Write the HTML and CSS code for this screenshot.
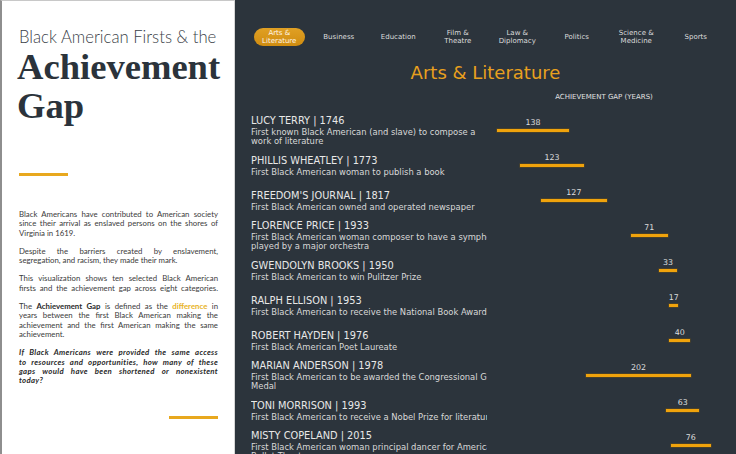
FILE: index.html
```html
<!DOCTYPE html>
<html lang="en">
<head>
<meta charset="utf-8">
<title>Black American Firsts &amp; the Achievement Gap</title>
<link rel="stylesheet" href="styles.css">
</head>
<body>
<div class="page">
  <aside class="intro">
    <div class="kicker">Black American Firsts &amp; the</div>
    <h1 class="headline">Achievement Gap</h1>
    <div class="rule"></div>
    <div class="copy">
      <p><span class="ln">Black Americans have contributed to American society</span><span class="ln">since their arrival as enslaved persons on the shores of</span><span class="ln end">Virginia in 1619.</span></p>
      <p><span class="ln">Despite the barriers created by enslavement,</span><span class="ln end">segregation, and racism, they made their mark.</span></p>
      <p><span class="ln">This visualization shows ten selected Black American</span><span class="ln">firsts and the achievement gap across eight categories.</span></p>
      <p><span class="ln">The <b>Achievement Gap</b> is defined as the <span class="hl">difference</span> in</span><span class="ln">years between the first Black American making the</span><span class="ln">achievement and the first American making the same</span><span class="ln end">achievement.</span></p>
      <p class="question"><span class="ln">If Black Americans were provided the same access</span><span class="ln">to resources and opportunities, how many of these</span><span class="ln">gaps would have been shortened or nonexistent</span><span class="ln end">today?</span></p>
    </div>
    <div class="rule rule-end"></div>
  </aside>

  <main class="viz">
    <nav class="tabs">
      <div class="tab"><span class="pill">Arts &amp;<br>Literature</span></div>
      <div class="tab">Business</div>
      <div class="tab">Education</div>
      <div class="tab">Film &amp;<br>Theatre</div>
      <div class="tab">Law &amp;<br>Diplomacy</div>
      <div class="tab">Politics</div>
      <div class="tab">Science &amp;<br>Medicine</div>
      <div class="tab">Sports</div>
    </nav>
    <h2 class="cat-title">Arts &amp; Literature</h2>
    <div class="axis-row"><div class="axis-label">ACHIEVEMENT GAP (YEARS)</div></div>

    <div class="rows">
      <div class="row">
        <div class="info"><div class="name">LUCY TERRY | 1746</div><div class="desc">First known Black American (and slave) to compose a<br>work of literature</div></div>
        <div class="chart"><div class="bar" style="left:0px;width:72.2px"><span class="val">138</span></div></div>
      </div>
      <div class="row">
        <div class="info"><div class="name">PHILLIS WHEATLEY | 1773</div><div class="desc">First Black American woman to publish a book</div></div>
        <div class="chart"><div class="bar" style="left:22.8px;width:64.3px"><span class="val">123</span></div></div>
      </div>
      <div class="row">
        <div class="info"><div class="name">FREEDOM'S JOURNAL | 1817</div><div class="desc">First Black American owned and operated newspaper</div></div>
        <div class="chart"><div class="bar" style="left:43.7px;width:66.4px"><span class="val">127</span></div></div>
      </div>
      <div class="row">
        <div class="info"><div class="name">FLORENCE PRICE | 1933</div><div class="desc">First Black American woman composer to have a symphony<br>played by a major orchestra</div></div>
        <div class="chart"><div class="bar" style="left:133.7px;width:37.1px"><span class="val">71</span></div></div>
      </div>
      <div class="row">
        <div class="info"><div class="name">GWENDOLYN BROOKS | 1950</div><div class="desc">First Black American to win Pulitzer Prize</div></div>
        <div class="chart"><div class="bar" style="left:162.4px;width:17.3px"><span class="val">33</span></div></div>
      </div>
      <div class="row">
        <div class="info"><div class="name">RALPH ELLISON | 1953</div><div class="desc">First Black American to receive the National Book Award</div></div>
        <div class="chart"><div class="bar" style="left:172.4px;width:8.9px"><span class="val">17</span></div></div>
      </div>
      <div class="row">
        <div class="info"><div class="name">ROBERT HAYDEN | 1976</div><div class="desc">First Black American Poet Laureate</div></div>
        <div class="chart"><div class="bar" style="left:172.4px;width:20.9px"><span class="val">40</span></div></div>
      </div>
      <div class="row">
        <div class="info"><div class="name">MARIAN ANDERSON | 1978</div><div class="desc">First Black American to be awarded the Congressional Gold<br>Medal</div></div>
        <div class="chart"><div class="bar" style="left:88.7px;width:105.6px"><span class="val">202</span></div></div>
      </div>
      <div class="row">
        <div class="info"><div class="name">TONI MORRISON | 1993</div><div class="desc">First Black American to receive a Nobel Prize for literature</div></div>
        <div class="chart"><div class="bar" style="left:169.3px;width:32.9px"><span class="val">63</span></div></div>
      </div>
      <div class="row">
        <div class="info"><div class="name">MISTY COPELAND | 2015</div><div class="desc">First Black American woman principal dancer for American<br>Ballet Theatre</div></div>
        <div class="chart"><div class="bar" style="left:174px;width:39.7px"><span class="val">76</span></div></div>
      </div>
    </div>
  </main>
</div>
</body>
</html>
```

FILE: styles.css
```css
html, body {
  margin: 0;
  padding: 0;
  height: 100%;
  overflow: hidden;
}

body {
  background: #2c343c;
}

.page {
  display: flex;
  height: 454px;
  width: 736px;
}

/* ---------- left intro panel ---------- */
.intro {
  width: 235px;
  flex: 0 0 235px;
  background: #ffffff;
  border-left: 2px solid #8e8e8e;
  border-top: 1px solid #c8c8c8;
  border-right: 1px solid #d6d6d6;
  padding: 26px 16px 0 17px;
  box-sizing: border-box;
  display: flex;
  flex-direction: column;
  color: #2b333b;
}

.kicker {
  font-family: Lato, "Open Sans", sans-serif;
  font-weight: 300;
  font-size: 16.7px;
  line-height: 20px;
  white-space: nowrap;
  color: #3a4148;
}

.headline {
  margin: 0 0 0 -2px;
  font-family: "Liberation Serif", "Times New Roman", serif;
  font-weight: 700;
  font-size: 36.6px;
  line-height: 39px;
  color: #2b333b;
}

.rule {
  width: 49px;
  height: 3px;
  background: #e8a81e;
  margin-top: 48px;
}

.rule-end {
  align-self: flex-end;
  margin-top: 31px;
  margin-right: 0;
}

.copy {
  margin-top: 34px;
  font-family: Lato, "Open Sans", sans-serif;
  font-size: 7.8px;
  line-height: 9.3px;
  color: #3b3b3b;
}

.copy p {
  margin: 0 0 9px 0;
}

.copy .ln {
  display: block;
  white-space: nowrap;
  text-align: justify;
  text-align-last: justify;
}

.copy .ln.end {
  text-align-last: left;
}

.copy b {
  font-weight: 700;
  color: #2b2b2b;
}

.copy .hl {
  color: #e8b326;
  font-weight: 700;
}

.copy .question {
  font-weight: 700;
  font-style: italic;
  letter-spacing: 0.3px;
  color: #2b2b2b;
  margin-bottom: 0;
}

/* ---------- right visualization panel ---------- */
.viz {
  flex: 1;
  background: #2c343c;
  padding-top: 28px;
  font-family: "DejaVu Sans", "Liberation Sans", sans-serif;
  color: #e4e4e4;
  overflow: hidden;
}

.tabs {
  display: grid;
  grid-template-columns: repeat(8, 59.5px);
  margin-left: 14.5px;
  height: 18px;
  align-items: center;
}

.tab {
  font-size: 7px;
  line-height: 8px;
  text-align: center;
  color: #dcdcdc;
}

.pill {
  display: inline-block;
  width: 51px;
  height: 18px;
  box-sizing: border-box;
  padding-top: 1px;
  border-radius: 9px;
  background: linear-gradient(180deg, #e0a024 0%, #d08c10 100%);
  color: #fff6e6;
}

.cat-title {
  margin: 16px 0 0 0;
  text-align: center;
  font-weight: 400;
  font-size: 18px;
  line-height: 22px;
  color: #e8a01e;
}

.axis-row {
  margin-top: 8px;
  padding-left: 262px;
  width: 214px;
}

.axis-label {
  text-align: center;
  font-size: 7px;
  line-height: 10px;
  color: #e0e0e0;
}

.rows {
  margin-top: 11px;
}

.row {
  display: flex;
  height: 35px;
  align-items: center;
}

.info {
  width: 236px;
  flex: 0 0 236px;
  margin-left: 16px;
  overflow: hidden;
  white-space: nowrap;
}

.name {
  font-size: 9.8px;
  line-height: 13.5px;
  color: #e8e8e8;
}

.desc {
  font-size: 8.4px;
  line-height: 9.5px;
  color: #d9d9d9;
}

.chart {
  position: relative;
  margin-left: 10px;
  flex: 1;
  height: 35px;
}

.bar {
  position: absolute;
  top: 16px;
  height: 3px;
  background: #f0a30c;
  box-shadow: 0 0 0 0.6px #5a4a22;
}

.val {
  position: absolute;
  left: 50%;
  bottom: 100%;
  margin-bottom: 2px;
  transform: translateX(-50%);
  font-size: 7.9px;
  line-height: 9px;
  color: #dedede;
  white-space: nowrap;
}
```
